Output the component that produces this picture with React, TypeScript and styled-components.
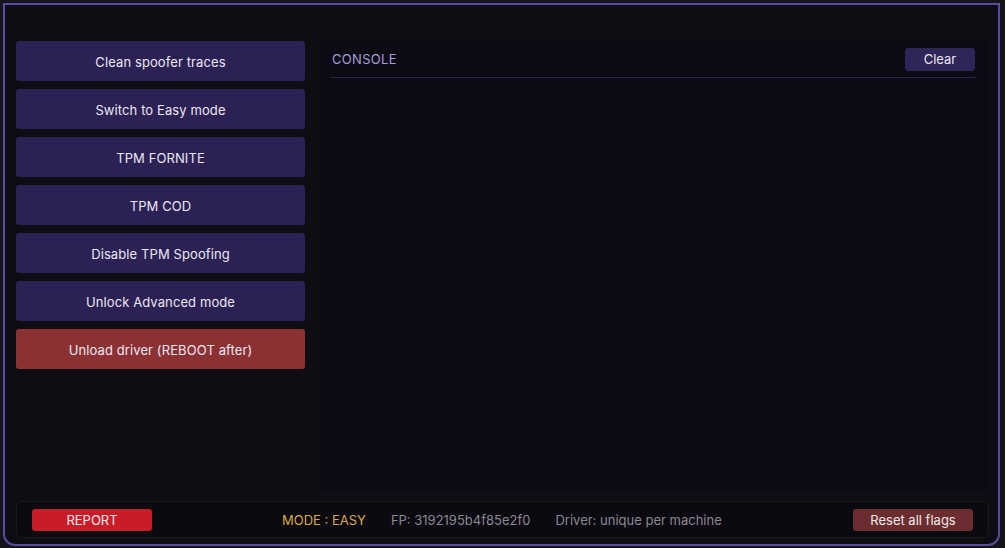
import React from 'react'
import styled, { createGlobalStyle } from 'styled-components'

const GlobalStyle = createGlobalStyle`
  html, body {
    margin: 0;
    padding: 0;
    background: #15141a;
  }
  body {
    font-family: Inter, 'Noto Sans', 'Liberation Sans', sans-serif;
    -webkit-font-smoothing: antialiased;
  }
`

const Page = styled.div`
  padding: 3px 5px 2px 3px;
  height: 548px;
  box-sizing: border-box;
`

const Window = styled.div`
  display: flex;
  flex-direction: column;
  height: 100%;
  box-sizing: border-box;
  border: 2px solid #5a4b9f;
  border-radius: 0 0 12px 12px;
  background: #0e0d13;
  overflow: hidden;
`

const Main = styled.div`
  flex: 1;
  display: flex;
  gap: 15px;
  padding: 36px 9px 0 11px;
  min-height: 0;
`

const Actions = styled.div`
  width: 289px;
  display: flex;
  flex-direction: column;
  gap: 8px;
`

type Tone = 'default' | 'danger'

const ActionButton = styled.button<{ $tone?: Tone }>`
  height: 40px;
  padding-top: 2px;
  border: none;
  border-radius: 3px;
  background: ${({ $tone }) => ($tone === 'danger' ? '#8b3134' : '#2b2155')};
  color: #ebe7f3;
  font-family: inherit;
  font-size: 13px;
  font-weight: 400;
  letter-spacing: 0.1px;
  cursor: pointer;
`

const Console = styled.section`
  flex: 1;
  display: flex;
  flex-direction: column;
  background: #0c0b14;
  padding: 0 14px 0 10px;
`

const ConsoleHeader = styled.div`
  height: 36px;
  display: flex;
  align-items: center;
  justify-content: space-between;
  border-bottom: 1px solid #2a2448;
  padding-left: 2px;
`

const ConsoleTitle = styled.span`
  color: #a79dda;
  font-size: 13px;
  letter-spacing: 0.3px;
`

const SmallButton = styled.button<{ $bg: string }>`
  height: 23px;
  width: 70px;
  border: none;
  border-radius: 3px;
  background: ${({ $bg }) => $bg};
  color: #ece8f2;
  font-family: inherit;
  font-size: 13px;
  font-weight: 400;
  cursor: pointer;
`

const Footer = styled.footer`
  height: 37px;
  margin: 10px 9px 6px 11px;
  display: flex;
  align-items: center;
  padding: 0 15px;
  border: 1px solid #1b1a23;
  border-radius: 6px;
  background: #0b0a10;
  box-sizing: border-box;
`

const FooterButton = styled.button<{ $bg: string }>`
  width: 120px;
  height: 22px;
  border: none;
  border-radius: 3px;
  background: ${({ $bg }) => $bg};
  color: #f1e9ea;
  font-family: inherit;
  font-size: 13px;
  font-weight: 400;
  cursor: pointer;
`

const Status = styled.div`
  display: flex;
  align-items: center;
  gap: 25px;
  margin-left: 130px;
  font-size: 13px;
`

const StatusText = styled.span<{ $accent?: boolean }>`
  color: ${({ $accent }) => ($accent ? '#d8a94b' : '#8b8894')};
`

const Spacer = styled.div`
  flex: 1;
`

const actions: { label: string; tone?: Tone }[] = [
  { label: 'Clean spoofer traces' },
  { label: 'Switch to Easy mode' },
  { label: 'TPM FORNITE' },
  { label: 'TPM COD' },
  { label: 'Disable TPM Spoofing' },
  { label: 'Unlock Advanced mode' },
  { label: 'Unload driver (REBOOT after)', tone: 'danger' },
]

const App: React.FC = () => (
  <>
    <GlobalStyle />
    <Page>
      <Window>
        <Main>
          <Actions>
            {actions.map(a => (
              <ActionButton key={a.label} $tone={a.tone}>
                {a.label}
              </ActionButton>
            ))}
          </Actions>

          <Console>
            <ConsoleHeader>
              <ConsoleTitle>CONSOLE</ConsoleTitle>
              <SmallButton $bg='#2e2559'>Clear</SmallButton>
            </ConsoleHeader>
          </Console>
        </Main>

        <Footer>
          <FooterButton $bg='#c81d29'>REPORT</FooterButton>
          <Status>
            <StatusText $accent>MODE : EASY</StatusText>
            <StatusText>FP: 3192195b4f85e2f0</StatusText>
            <StatusText>Driver: unique per machine</StatusText>
          </Status>
          <Spacer />
          <FooterButton $bg='#6b2d2f'>Reset all flags</FooterButton>
        </Footer>
      </Window>
    </Page>
  </>
)

export default App
